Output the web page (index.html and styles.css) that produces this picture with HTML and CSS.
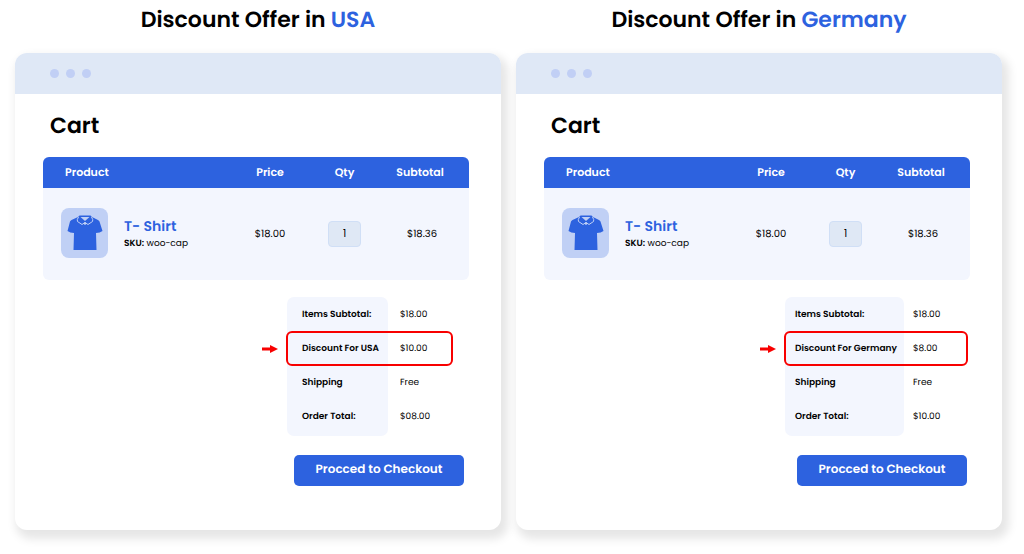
FILE: index.html
```html
<!DOCTYPE html>
<html lang="en">
<head>
  <meta charset="utf-8">
  <title>Discount Offer by Country</title>
  <meta name="viewport" content="width=device-width, initial-scale=1">
  <link rel="stylesheet" href="styles.css">
</head>
<body>
  <!-- shared icons -->
  <svg class="sprite" aria-hidden="true">
    <symbol id="shirt" viewBox="0 0 36 36">
      <path fill="#2d62df" d="M11 2 L4.500 5 Q3.500 5.500 3 6.500 L0.500 16 Q3 18 7 18 L6.500 35 H29.500 L29 18 Q33 18 35.500 16 L32.500 6.500 Q32 5.500 31 5 L25 2 L23.500 0.500 H12.500 Z"/>
      <path fill="#c0d0f5" d="M13.500 2 H22.500 L18 6 Z"/>
      <path fill="none" stroke="#c0d0f5" stroke-width="1" d="M11.500 2 Q9.500 5 10.500 6.500 L15 9.500 L18 7.500 L21 9.500 L25.500 6.500 Q26.500 5 24.500 2"/>
      <circle cx="18" cy="8.500" r="1.300" fill="#c0d0f5"/>
    </symbol>
    <symbol id="arrow" viewBox="0 0 16 8">
      <path fill="#f80000" d="M0 2.500 H8 V0 L16 4 L8 8 V5.500 H0 Z"/>
    </symbol>
  </svg>

  <main class="offers">
    <section class="offer">
      <h1 class="title">Discount Offer in <span>USA</span></h1>
      <div class="window">
        <div class="bar"><i></i><i></i><i></i></div>
        <div class="content">
          <h2 class="heading">Cart</h2>
          <table class="cart">
            <thead>
              <tr>
                <th scope="col" class="product">Product</th>
                <th scope="col" class="price">Price</th>
                <th scope="col" class="qty">Qty</th>
                <th scope="col" class="subtotal">Subtotal</th>
              </tr>
            </thead>
            <tbody>
              <tr>
                <td>
                  <div class="item">
                    <div class="thumb"><svg><use href="#shirt"/></svg></div>
                    <div class="info">
                      <div class="name">T- Shirt</div>
                      <div class="sku"><b>SKU:</b> woo-cap</div>
                    </div>
                  </div>
                </td>
                <td>$18.00</td>
                <td><input class="count" type="text" value="1" aria-label="Quantity"></td>
                <td class="amount">$18.36</td>
              </tr>
            </tbody>
          </table>
          <div class="totals usa">
            <table class="summary">
              <tr><th scope="row">Items Subtotal:</th><td>$18.00</td></tr>
              <tr class="discount"><th scope="row"><svg class="arrow"><use href="#arrow"/></svg>Discount For USA</th><td>$10.00</td></tr>
              <tr><th scope="row">Shipping</th><td>Free</td></tr>
              <tr><th scope="row">Order Total:</th><td>$08.00</td></tr>
            </table>
            <button class="checkout" type="button">Procced to Checkout</button>
          </div>
        </div>
      </div>
    </section>

    <section class="offer">
      <h1 class="title">Discount Offer in <span>Germany</span></h1>
      <div class="window">
        <div class="bar"><i></i><i></i><i></i></div>
        <div class="content">
          <h2 class="heading">Cart</h2>
          <table class="cart">
            <thead>
              <tr>
                <th scope="col" class="product">Product</th>
                <th scope="col" class="price">Price</th>
                <th scope="col" class="qty">Qty</th>
                <th scope="col" class="subtotal">Subtotal</th>
              </tr>
            </thead>
            <tbody>
              <tr>
                <td>
                  <div class="item">
                    <div class="thumb"><svg><use href="#shirt"/></svg></div>
                    <div class="info">
                      <div class="name">T- Shirt</div>
                      <div class="sku"><b>SKU:</b> woo-cap</div>
                    </div>
                  </div>
                </td>
                <td>$18.00</td>
                <td><input class="count" type="text" value="1" aria-label="Quantity"></td>
                <td class="amount">$18.36</td>
              </tr>
            </tbody>
          </table>
          <div class="totals germany">
            <table class="summary">
              <tr><th scope="row">Items Subtotal:</th><td>$18.00</td></tr>
              <tr class="discount"><th scope="row"><svg class="arrow"><use href="#arrow"/></svg>Discount For Germany</th><td>$8.00</td></tr>
              <tr><th scope="row">Shipping</th><td>Free</td></tr>
              <tr><th scope="row">Order Total:</th><td>$10.00</td></tr>
            </table>
            <button class="checkout" type="button">Procced to Checkout</button>
          </div>
        </div>
      </div>
    </section>
  </main>
</body>
</html>
```
FILE: styles.css
```css
* {
  box-sizing: border-box;
}
body {
  margin: 0;
  background-color: #fff;
  color: #000;
  font-family: Poppins, Inter, sans-serif;
  font-size: 10px;
  text-rendering: geometricPrecision;
}
.sprite {
  display: none;
}
.offers {
  display: grid;
  grid-template-columns: 1fr 1fr;
  gap: 15px;
  padding: 0 22px 24px 15px;
}
.title {
  margin: 0;
  padding: 4px 0 17px;
  font-size: 22px;
  line-height: 32px;
  font-weight: 600;
  text-align: center;
}
.title span {
  color: #2d62df;
}
.window {
  background-color: #fff;
  border-radius: 12px;
  box-shadow: 4px 6px 10px 3px rgba(0, 0, 0, 0.1);
}
.bar {
  display: flex;
  align-items: center;
  gap: 7px;
  height: 41px;
  padding-left: 35px;
  background-color: #dfe8f6;
  border-radius: 12px 12px 0 0;
}
.bar i {
  width: 9px;
  height: 9px;
  border-radius: 50%;
  background-color: #c1cff5;
}
.content {
  padding: 16px 32px 44px 28px;
}
.heading {
  margin: 0 0 15px 7px;
  font-size: 22px;
  line-height: 32px;
  font-weight: 600;
}

/* cart table */
.cart {
  width: 100%;
  table-layout: fixed;
  border-collapse: separate;
  border-spacing: 0;
  overflow: hidden;
  border-radius: 6px;
  background-color: #f3f6fe;
  text-align: center;
}
.cart th {
  height: 31px;
  padding: 0;
  background-color: #2d62df;
  color: #fff;
  font-size: 11px;
  font-weight: 600;
}
.cart td {
  height: 92px;
  padding: 0;
}
.cart .product {
  padding-left: 22px;
  text-align: left;
}
.cart .price {
  width: 74px;
}
.cart .qty {
  width: 75px;
}
.cart .subtotal {
  width: 87px;
  padding-right: 11px;
}
.cart .amount {
  padding-right: 7px;
}
.item {
  display: flex;
  align-items: center;
  gap: 16px;
  margin-bottom: 2px;
  padding-left: 18px;
  text-align: left;
}
.thumb {
  display: flex;
  align-items: center;
  justify-content: center;
  width: 47px;
  height: 50px;
  border-radius: 8px;
  background-color: #c0d0f5;
}
.thumb svg {
  width: 36px;
  height: 36px;
}
.info {
  padding-top: 2px;
}
.name {
  color: #2d62df;
  font-size: 14px;
  line-height: 19px;
  font-weight: 600;
}
.sku {
  font-size: 9px;
  line-height: 16px;
}
.sku b {
  font-weight: 600;
}
.count {
  display: block;
  width: 33px;
  height: 26px;
  margin: 0 auto;
  padding: 0;
  border: 1px solid #d0dff6;
  border-radius: 4px;
  background-color: #dfe8f5;
  color: #000;
  font: inherit;
  text-align: center;
}

/* order totals */
.totals {
  display: flex;
  flex-direction: column;
  align-items: flex-end;
  gap: 19px;
  margin-top: 17px;
}
.summary {
  border-spacing: 0;
  font-size: 9px;
  text-align: left;
}
.summary th,
.summary td {
  height: 34px;
  padding: 0;
  white-space: nowrap;
}
.summary th {
  background-color: #f3f6fe;
  font-weight: 600;
}
.summary tr:first-child th {
  height: 35px;
  border-radius: 7px 7px 0 0;
}
.summary tr:first-child th,
.summary tr:first-child td {
  padding-top: 2px;
}
.summary tr:last-child th {
  height: 36px;
  border-radius: 0 0 7px 7px;
}
.summary tr:last-child th,
.summary tr:last-child td {
  padding-bottom: 2px;
}
.discount {
  position: relative;
}
/* red frame over the discount row */
.discount td::after {
  content: "";
  position: absolute;
  inset: -1px 0 0 -1px;
  border: 2px solid #f80000;
  border-radius: 6px;
}
.arrow {
  position: absolute;
  top: 13px;
  left: -25px;
  width: 16px;
  height: 8px;
}
.checkout {
  width: 170px;
  height: 31px;
  padding: 0 0 2px;
  border: 0;
  border-radius: 5px;
  background-color: #2d62df;
  color: #fff;
  font-family: inherit;
  font-size: 12px;
  font-weight: 600;
  text-rendering: inherit;
  cursor: pointer;
}
.usa .summary {
  width: 166px;
  margin-right: 16px;
}
.usa th {
  width: 101px;
  padding-left: 15px;
}
.usa td {
  padding-left: 12px;
}
.usa .checkout {
  margin-right: 5px;
}
.germany .summary {
  width: 183px;
  margin-right: 2px;
}
.germany th {
  width: 119px;
  padding-left: 10px;
}
.germany td {
  padding-left: 9px;
}
.germany .checkout {
  margin-right: 3px;
}
```
